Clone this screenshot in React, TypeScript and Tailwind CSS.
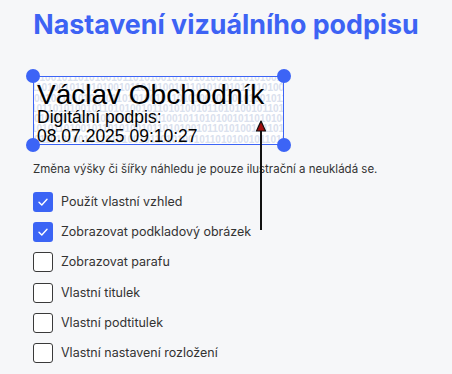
import React from 'react';

const options = [
    { label: 'Použít vlastní vzhled', checked: true },
    { label: 'Zobrazovat podkladový obrázek', checked: true },
    { label: 'Zobrazovat parafu', checked: false },
    { label: 'Vlastní titulek', checked: false },
    { label: 'Vlastní podtitulek', checked: false },
    { label: 'Vlastní nastavení rozložení', checked: false },
];

const binaryRows = [
    '0100101101010010110101001011010100101101010010110101',
    '1101001011010100101101010010110101001011010100101101',
    '0010110101001011010100101101010010110101001011010100',
    '1011010100101101010010110101001011010100101101010010',
    '0101001011010100101101010010110101001011010100101101',
    '1010110100101101010010110101001011010100101101010010',
    '0110101001011010100101101010010110101001011010100101',
    '1001011010100101101010010110101001011010100101101010',
];

const Handle: React.FC<{ pos: string }> = ({ pos }) => (
    <span className={`absolute w-[14px] h-[14px] rounded-full bg-[#3c64f6] ${pos}`} />
);

const Checkbox: React.FC<{ checked: boolean }> = ({ checked }) =>
    checked ? (
        <span className="w-[20px] h-[20px] rounded-[3px] bg-[#3b64f5] flex items-center justify-center shrink-0">
            <svg width="12" height="12" viewBox="0 0 12 12" fill="none">
                <polyline points="2,6.2 4.8,9 10,3.2" stroke="white" strokeWidth="1.4" strokeLinecap="round" strokeLinejoin="round" />
            </svg>
        </span>
    ) : (
        <span className="w-[20px] h-[20px] rounded-[3px] border-[1.5px] border-[#3a3a3a] bg-white shrink-0" />
    );

export default function App() {
    return (
        <div className="relative w-[452px] h-[374px] bg-[#f6f7f9] overflow-hidden font-['Inter',sans-serif]">
            <h1 className="pt-[8px] text-center text-[26.8px] leading-[32px] font-bold text-[#3d63f4]">
                Nastavení vizuálního podpisu
            </h1>

            {/* signature preview */}
            <div className="relative ml-[33px] mt-[36px] w-[251px] h-[69px] border border-[#3c64f6] bg-white">
                <div className="absolute inset-0 overflow-hidden select-none font-['Liberation_Sans',sans-serif] font-bold text-[10px] leading-[10.3px] text-[#dae1ee]">
                    <div className="-mt-[4px]">
                        {binaryRows.map((row, i) => (
                            <div key={i} className={i % 2 ? '-ml-[3px] whitespace-nowrap' : 'ml-0 whitespace-nowrap'}>{row}</div>
                        ))}
                    </div>
                </div>
                <div className="relative pl-[3px] pt-[4px] font-['Liberation_Sans',Arial,sans-serif] text-black">
                    <div className="text-[28px] leading-[28px] whitespace-nowrap">Václav Obchodník</div>
                    <div className="-mt-[1px] text-[17.5px] leading-[19px] whitespace-nowrap">Digitální podpis:</div>
                    <div className="text-[17.5px] leading-[19px] whitespace-nowrap">08.07.2025 09:10:27</div>
                </div>
                <Handle pos="-left-[8px] -top-[8px]" />
                <Handle pos="-right-[8px] -top-[8px]" />
                <Handle pos="-left-[8px] -bottom-[8px]" />
                <Handle pos="-right-[8px] -bottom-[8px]" />
            </div>

            <p className="ml-[33px] mt-[16px] text-[11.5px] leading-[16px] text-[#333]">
                Změna výšky či šířky náhledu je pouze ilustrační a neukládá se.
            </p>

            <div className="ml-[33px] mt-[15px] flex flex-col gap-[10.2px]">
                {options.map((o) => (
                    <label key={o.label} className="flex items-center gap-[8px] h-[20px]">
                        <Checkbox checked={o.checked} />
                        <span className="text-[12.5px] leading-[16px] text-[#333]">{o.label}</span>
                    </label>
                ))}
            </div>

            {/* annotation arrow */}
            <svg className="absolute left-[255px] top-[120px]" width="12" height="112" viewBox="0 0 12 112">
                <line x1="6" y1="8" x2="6" y2="110" stroke="#111" strokeWidth="2" />
                <polygon points="6,1 10.5,11 1.5,11" fill="#a30d0d" stroke="#111" strokeWidth="1.2" strokeLinejoin="round" />
            </svg>
        </div>
    );
}
